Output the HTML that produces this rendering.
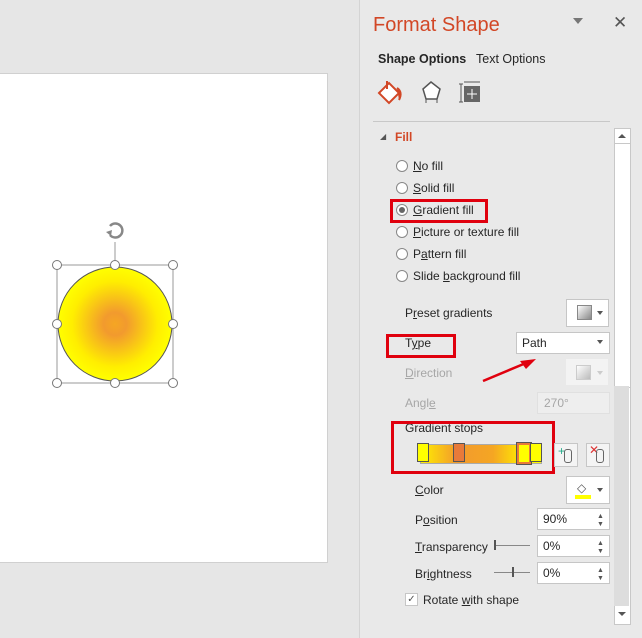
<!DOCTYPE html><html><head><style>
body{margin:0;width:642px;height:638px;background:#e6e6e6;position:relative;overflow:hidden;font-family:"Liberation Sans",sans-serif;font-size:12px;color:#262626}
.a{position:absolute}
.u{text-decoration:underline}
.rad{position:absolute;width:10px;height:10px;border:1px solid #888;border-radius:50%;background:#fff}
.box{position:absolute;background:#fff;border:1px solid #c6c6c6}
.red{position:absolute;border:3px solid #e0000e}
.g{color:#a6a6a6}
</style></head><body>
<div class="a" style="left:0;top:73px;width:327px;height:488px;background:#fff;border:1px solid #d0d0d0;border-left:none"></div>
<svg class="a" style="left:0;top:0" width="360" height="638">
<defs><radialGradient id="rg"><stop offset="0" stop-color="#f5a623"/><stop offset="0.2" stop-color="#f29a2e"/><stop offset="0.75" stop-color="#ffee00"/><stop offset="1" stop-color="#ffff00"/></radialGradient></defs>
<circle cx="115" cy="324" r="57" fill="url(#rg)" stroke="#555" stroke-width="1"/>
<rect x="57" y="265" width="116" height="118" fill="none" stroke="#999"/>
<line x1="115" y1="242" x2="115" y2="265" stroke="#999"/>
<path d="M110 226 a7 7 0 1 1 0 9" fill="none" stroke="#888" stroke-width="2.5"/>
<path d="M106 232 l5 4 l1 -6z" fill="#888"/>
<g fill="#fff" stroke="#777">
<circle cx="57" cy="265" r="4.5"/><circle cx="115" cy="265" r="4.5"/><circle cx="173" cy="265" r="4.5"/>
<circle cx="57" cy="324" r="4.5"/><circle cx="173" cy="324" r="4.5"/>
<circle cx="57" cy="383" r="4.5"/><circle cx="115" cy="383" r="4.5"/><circle cx="173" cy="383" r="4.5"/></g>
</svg>
<div class="a" style="left:359px;top:0;width:283px;height:638px;background:#e9e9e9;border-left:1px solid #d4d4d4"></div>
<div class="a" style="left:373px;top:14px;font-size:20px;color:#d24726">Format Shape</div>
<div class="a" style="left:573px;top:18px;width:0;height:0;border-left:5px solid transparent;border-right:5px solid transparent;border-top:6px solid #777"></div>
<div class="a" style="left:613px;top:13px;font-size:17px;color:#555">✕</div>
<div class="a" style="left:378px;top:52px;font-weight:bold;font-size:12.5px">Shape Options</div>
<div class="a" style="left:476px;top:52px;font-size:12.5px">Text Options</div>
<svg class="a" style="left:375px;top:78px" width="120" height="40">
<path d="M4 15 l10 -10 l10 10 l-10 10z" fill="#fff" stroke="#d24726" stroke-width="2"/>
<path d="M12 3 v8" stroke="#d24726" stroke-width="2"/>
<path d="M22 10 q6 4 2 12" fill="#d24726" stroke="#d24726" stroke-width="2"/>
<path d="M56 4 l9 7 l-3 10 h-11 l-3 -10z" fill="#fff" stroke="#555" stroke-width="1.5"/>
<path d="M51 21 v4 M62 21 v4" stroke="#555"/>
<rect x="89" y="8" width="16" height="16" fill="#666"/>
<path d="M86 6 v18 M84 6h4 M84 24h4 M89 4h16" stroke="#555"/>
<path d="M97 11v10 M92 16h10" stroke="#fff"/>
</svg>
<div class="a" style="left:373px;top:121px;width:237px;height:1px;background:#c8c8c8"></div>
<div class="a" style="left:614px;top:128px;width:15px;height:495px;background:#fff;border:1px solid #c8c8c8"></div>
<div class="a" style="left:614px;top:143px;width:15px;height:243px;background:#fff;border:1px solid #c8c8c8"></div>
<div class="a" style="left:614px;top:386px;width:15px;height:220px;background:#ddd"></div>
<div class="a" style="left:618px;top:134px;border-left:4px solid transparent;border-right:4px solid transparent;border-bottom:4px solid #555"></div>
<div class="a" style="left:618px;top:612px;border-left:4px solid transparent;border-right:4px solid transparent;border-top:4px solid #555"></div>
<div class="a" style="left:380px;top:132px;font-size:8px;color:#555">◢</div>
<div class="a" style="left:395px;top:130px;font-weight:bold;color:#d24726">Fill</div>
<div class="rad" style="left:396px;top:160px"></div><div class="a" style="left:413px;top:159px"><span class="u">N</span>o fill</div>
<div class="rad" style="left:396px;top:182px"></div><div class="a" style="left:413px;top:181px"><span class="u">S</span>olid fill</div>
<div class="rad" style="left:396px;top:204px"></div><div class="a" style="left:399px;top:207px;width:6px;height:6px;border-radius:50%;background:#666"></div><div class="a" style="left:413px;top:203px"><span class="u">G</span>radient fill</div>
<div class="rad" style="left:396px;top:226px"></div><div class="a" style="left:413px;top:225px"><span class="u">P</span>icture or texture fill</div>
<div class="rad" style="left:396px;top:248px"></div><div class="a" style="left:413px;top:247px">P<span class="u">a</span>ttern fill</div>
<div class="rad" style="left:396px;top:270px"></div><div class="a" style="left:413px;top:269px">Slide <span class="u">b</span>ackground fill</div>
<div class="red" style="left:390px;top:199px;width:92px;height:18px"></div>
<div class="a" style="left:405px;top:306px">P<span class="u">r</span>eset gradients</div>
<div class="box" style="left:566px;top:299px;width:41px;height:26px"></div>
<div class="a" style="left:577px;top:305px;width:13px;height:13px;background:linear-gradient(135deg,#fff,#888);border:1px solid #888"></div>
<div class="a" style="left:597px;top:311px;border-left:3.5px solid transparent;border-right:3.5px solid transparent;border-top:4px solid #555"></div>
<div class="a" style="left:405px;top:336px">T<span class="u">y</span>pe</div>
<div class="red" style="left:386px;top:334px;width:64px;height:18px"></div>
<div class="box" style="left:516px;top:332px;width:92px;height:20px"></div>
<div class="a" style="left:522px;top:336px">Path</div>
<div class="a" style="left:597px;top:340px;border-left:3.5px solid transparent;border-right:3.5px solid transparent;border-top:4px solid #555"></div>
<svg class="a" style="left:480px;top:355px" width="60" height="30"><path d="M3 26 L46 8" stroke="#e0000e" stroke-width="2.5"/><path d="M56 4 L40 6 L46 14z" fill="#e0000e"/></svg>
<div class="a g" style="left:405px;top:366px"><span class="u">D</span>irection</div>
<div class="a" style="left:566px;top:359px;width:42px;height:26px;background:#f3f3f3"></div>
<div class="a" style="left:576px;top:365px;width:13px;height:13px;background:linear-gradient(135deg,#fff,#bbb);border:1px solid #ccc"></div>
<div class="a" style="left:597px;top:371px;border-left:3.5px solid transparent;border-right:3.5px solid transparent;border-top:4px solid #ccc"></div>
<div class="a g" style="left:405px;top:396px">Angl<span class="u">e</span></div>
<div class="a" style="left:537px;top:392px;width:71px;height:20px;background:#eee;border:1px solid #e0e0e0"></div>
<div class="a g" style="left:544px;top:396px">270°</div>
<div class="a" style="left:405px;top:421px">Gradient stops</div>
<div class="red" style="left:391px;top:421px;width:158px;height:47px"></div>
<div class="a" style="left:420px;top:444px;width:120px;height:18px;background:linear-gradient(90deg,#ffee00,#f29a2e 30%,#f5a623 60%,#ffee00 85%,#ffff00);border:1px solid #aaa"></div>
<div class="a" style="left:417px;top:443px;width:10px;height:17px;background:#ffff00;border:1px solid #555"></div>
<div class="a" style="left:453px;top:443px;width:10px;height:17px;background:#e87a3a;border:1px solid #555"></div>
<div class="a" style="left:517px;top:443px;width:10px;height:17px;background:#ffff00;border:2px solid #e87a3a;outline:1px solid #555"></div>
<div class="a" style="left:530px;top:443px;width:10px;height:17px;background:#ffff00;border:1px solid #555"></div>
<div class="box" style="left:554px;top:443px;width:22px;height:22px;background:#f4f4f4"></div>
<div class="a" style="left:558px;top:444px;color:#2a8;font-size:12px">+</div><div class="a" style="left:564px;top:449px;width:6px;height:12px;border:1px solid #666;border-radius:3px"></div>
<div class="box" style="left:586px;top:443px;width:22px;height:22px;background:#f4f4f4"></div>
<div class="a" style="left:589px;top:443px;color:#d33;font-size:12px">✕</div><div class="a" style="left:596px;top:449px;width:6px;height:12px;border:1px solid #666;border-radius:3px"></div>
<div class="a" style="left:415px;top:483px"><span class="u">C</span>olor</div>
<div class="box" style="left:566px;top:476px;width:42px;height:26px"></div>
<div class="a" style="left:575px;top:495px;width:16px;height:4px;background:#ffff00"></div>
<div class="a" style="left:577px;top:481px;font-size:12px;color:#555">◇</div>
<div class="a" style="left:597px;top:488px;border-left:3.5px solid transparent;border-right:3.5px solid transparent;border-top:4px solid #555"></div>
<div class="a" style="left:415px;top:513px">P<span class="u">o</span>sition</div>
<div class="box" style="left:537px;top:508px;width:71px;height:20px"></div><div class="a" style="left:543px;top:512px">90%</div>
<div class="a" style="left:415px;top:540px"><span class="u">T</span>ransparency</div>
<div class="a" style="left:494px;top:545px;width:36px;height:1px;background:#888"></div><div class="a" style="left:494px;top:540px;width:2px;height:10px;background:#555"></div>
<div class="box" style="left:537px;top:535px;width:71px;height:20px"></div><div class="a" style="left:543px;top:539px">0%</div>
<div class="a" style="left:415px;top:567px">Br<span class="u">i</span>ghtness</div>
<div class="a" style="left:494px;top:572px;width:36px;height:1px;background:#888"></div><div class="a" style="left:512px;top:567px;width:2px;height:10px;background:#555"></div>
<div class="box" style="left:537px;top:562px;width:71px;height:20px"></div><div class="a" style="left:543px;top:566px">0%</div>
<div class="a" style="left:597px;top:513px;font-size:7px;color:#555;line-height:8px">▲<br>▼</div>
<div class="a" style="left:597px;top:540px;font-size:7px;color:#555;line-height:8px">▲<br>▼</div>
<div class="a" style="left:597px;top:567px;font-size:7px;color:#555;line-height:8px">▲<br>▼</div>
<div class="box" style="left:405px;top:593px;width:11px;height:11px;font-size:10px;line-height:11px;text-align:center;color:#555">✓</div>
<div class="a" style="left:423px;top:593px">Rotate <span class="u">w</span>ith shape</div>
</body></html>
